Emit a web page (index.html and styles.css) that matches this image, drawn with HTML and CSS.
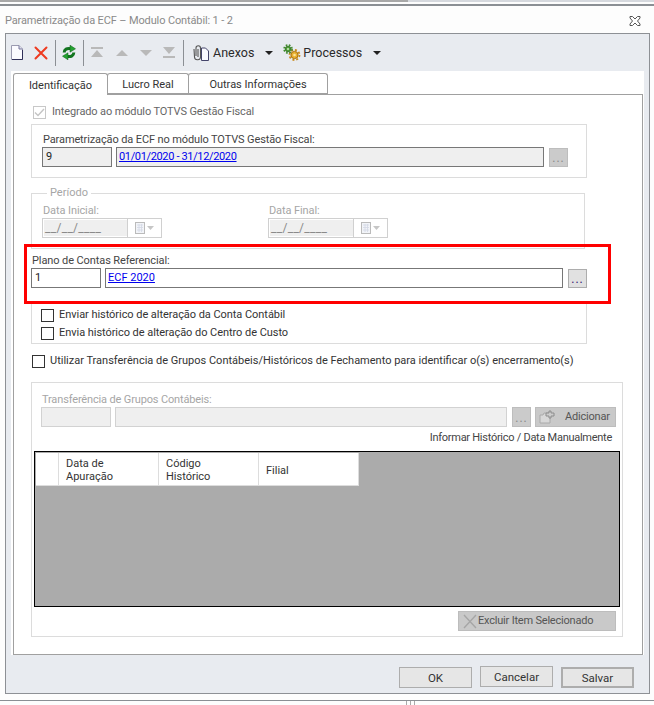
FILE: index.html
```html
<!DOCTYPE html>
<html lang="pt">
<head>
<meta charset="utf-8">
<title>Parametrização da ECF</title>
<link rel="stylesheet" href="styles.css">
</head>
<body>
<div class="page">
  <div class="top-strip"><span class="strip-dark"></span><span class="strip-light"></span></div>
  <div class="top-line"></div>
  <header class="titlebar">
    <span class="title-text">Parametrização da ECF – Modulo Contábil: 1 - 2</span>
    <svg class="close-icon" width="12" height="10" viewBox="0 0 12 10"><path d="M1 .5h2.500L6 3l2.500-2.500H11V2L8.500 5 11 8v1.500H8.500L6 7 3.500 9.500H1V8l2.500-3L1 2z" fill="#fff" stroke="#555" stroke-width="1"/></svg>
  </header>
  <div class="frame">
    <div class="toolbar">
      <svg class="ti ti-new" width="12" height="15" viewBox="0 0 12 15"><path d="M.5.5h7.500l3.500 3.500v10.500H.5z" fill="#fbfbff" stroke="#9a9ab0"/><path d="M8 .5v3.500h3.500" fill="#dde" stroke="#77779a"/><path d="M11.500 5v9.500H1" fill="none" stroke="#30305a"/></svg>
      <svg class="ti ti-del" width="14" height="14" viewBox="0 0 14 14"><path d="M1.500 1.500l11 11M12.500 1.500l-11 11" stroke="#ee3a20" stroke-width="2" stroke-linecap="round"/></svg>
      <span class="sep sep-1"></span>
      <svg class="ti ti-refresh" width="14" height="15" viewBox="0 0 14 15"><path d="M2.200 7.500C2.200 4.500 5 2.800 8.500 3.600" fill="none" stroke="#12751f" stroke-width="3"/><path d="M8 .2l5.500 3.600L8 7.200z" fill="#23a331" stroke="#0c5a14" stroke-width=".5"/><path d="M11.800 7.500c0 3-2.800 4.700-6.300 3.900" fill="none" stroke="#12751f" stroke-width="3"/><path d="M6 7.800L.5 11.200 6 14.800z" fill="#23a331" stroke="#0c5a14" stroke-width=".5"/></svg>
      <span class="sep sep-2"></span>
      <svg class="ti ti-first" width="12" height="11" viewBox="0 0 12 11"><path d="M0 0h12v2H0zM6 3l6 7H0z" fill="#b9b9b9"/></svg>
      <svg class="ti ti-up" width="12" height="6" viewBox="0 0 12 6"><path d="M6 0l6 6H0z" fill="#b9b9b9"/></svg>
      <svg class="ti ti-down" width="12" height="6" viewBox="0 0 12 6"><path d="M0 0h12L6 6z" fill="#b9b9b9"/></svg>
      <svg class="ti ti-last" width="12" height="11" viewBox="0 0 12 11"><path d="M0 0h12L6 7zM0 9h12v2H0z" fill="#b9b9b9"/></svg>
      <span class="sep sep-3"></span>
      <svg class="ti ti-clip" width="17" height="16" viewBox="0 0 17 16"><path d="M9.500 3h4l3 3v9.500h-7z" fill="#fafaff" stroke="#44446a"/><path d="M4 11V3a2.200 2.200 0 0 1 4.500 0v8.500a3 3 0 0 1-6 .5L2 4M6 4v8" fill="none" stroke="#555" stroke-width="1.100"/></svg>
      <span class="tool-text tool-anexos">Anexos</span>
      <span class="caret caret-1"></span>
      <svg class="ti ti-proc" width="18" height="17" viewBox="0 0 18 17"><circle cx="11.500" cy="11" r="3.600" fill="#e9b030" stroke="#a8710f" stroke-width="1"/><circle cx="11.500" cy="11" r="5" fill="none" stroke="#c98a1c" stroke-width="1.800" stroke-dasharray="2 1.900"/><circle cx="11.500" cy="11" r="1.300" fill="#fbe39a"/><circle cx="5" cy="5" r="2.800" fill="#4f9e38" stroke="#2c6a1c" stroke-width=".8"/><circle cx="5" cy="5" r="4" fill="none" stroke="#3f8a2c" stroke-width="1.600" stroke-dasharray="1.700 1.500"/><circle cx="5" cy="5" r="1" fill="#d5ecc6"/></svg>
      <span class="tool-text tool-proc">Processos</span>
      <span class="caret caret-2"></span>
    </div>
    <div class="sheet">
      <nav class="tabs">
        <span class="tab tab-active tab-1">Identificação</span>
        <span class="tab tab-2">Lucro Real</span>
        <span class="tab tab-3">Outras Informações</span>
      </nav>
      <div class="panel">
        <label class="check check-top muted-dark"><span class="box box-off"><svg width="11" height="9" viewBox="0 0 11 9"><path d="M1 4.500l3 3 6-6.500" fill="none" stroke="#c4c4c4" stroke-width="1.400"/></svg></span>Integrado ao módulo TOTVS Gestão Fiscal</label>

        <section class="group group-ecf">
          <div class="lbl">Parametrização da ECF no módulo TOTVS Gestão Fiscal:</div>
          <div class="row">
            <span class="inp inp-off inp-code">9</span>
            <span class="inp inp-off inp-ecf"><a class="lnk">01/01/2020 - 31/12/2020</a></span>
            <span class="dots dots-off dots-ecf">...</span>
          </div>
        </section>

        <fieldset class="periodo">
          <legend>Período</legend>
          <div class="date-cols">
            <div class="date-col date-col-a">
              <div class="lbl lbl-off">Data Inicial:</div>
              <div class="date"><span class="date-val">__/__/____</span><span class="date-btn"><svg width="20" height="14" viewBox="0 0 20 14"><rect x=".5" y="1.500" width="9" height="11" fill="#f2f4f8" stroke="#bbb"/><path d="M2 4h6M2 6.500h6M2 9h6M4 3v8M6.500 3v8" stroke="#d3d8e4" stroke-width=".8"/><path d="M12 5h7l-3.500 4z" fill="#c6c6c6"/></svg></span></div>
            </div>
            <div class="date-col">
              <div class="lbl lbl-off">Data Final:</div>
              <div class="date"><span class="date-val">__/__/____</span><span class="date-btn"><svg width="20" height="14" viewBox="0 0 20 14"><rect x=".5" y="1.500" width="9" height="11" fill="#f2f4f8" stroke="#bbb"/><path d="M2 4h6M2 6.500h6M2 9h6M4 3v8M6.500 3v8" stroke="#d3d8e4" stroke-width=".8"/><path d="M12 5h7l-3.500 4z" fill="#c6c6c6"/></svg></span></div>
            </div>
          </div>
        </fieldset>

        <section class="plano">
          <div class="lbl">Plano de Contas Referencial:</div>
          <div class="row">
            <span class="inp inp-code">1</span>
            <span class="inp inp-plano"><a class="lnk">ECF 2020</a></span>
            <span class="dots dots-on">...</span>
          </div>
        </section>

        <section class="group group-hist">
          <label class="check"><span class="box"></span>Enviar histórico de alteração da Conta Contábil</label>
          <label class="check check-2"><span class="box"></span>Envia histórico de alteração do Centro de Custo</label>
        </section>

        <label class="check check-util"><span class="box"></span>Utilizar Transferência de Grupos Contábeis/Históricos de Fechamento para identificar o(s) encerramento(s)</label>

        <section class="group group-transf">
          <div class="lbl lbl-off lbl-transf">Transferência de Grupos Contábeis:</div>
          <div class="row row-transf">
            <span class="inp inp-ghost inp-code"></span>
            <span class="inp inp-ghost inp-transf"></span>
            <span class="dots dots-off dots-transf">...</span>
            <span class="btn-off btn-add"><svg width="18" height="14" viewBox="0 0 18 14"><path d="M1 5h3l1-2h6v10H1z" fill="#d8d8d8" stroke="#aaa"/><path d="M10 1h2v2h3v3h-3v2h-2V6H7V3h3z" fill="#ccc" stroke="#8c8c8c"/></svg><span class="btn-add-text">Adicionar</span></span>
          </div>
          <div class="manual">Informar Histórico / Data Manualmente</div>
          <div class="grid">
            <div class="grid-head">
              <span class="gh gh-stub"></span>
              <span class="gh">Data de<br>Apuração</span>
              <span class="gh">Código<br>Histórico</span>
              <span class="gh">Filial</span>
            </div>
          </div>
          <div class="del-row">
            <span class="btn-off btn-del"><svg width="14" height="15" viewBox="0 0 14 15"><path d="M1 1l12 13M13 1L1 14" stroke="#a6a6a6" stroke-width="1.400"/></svg>Excluir Item Selecionado</span>
          </div>
        </section>
      </div>
    </div>
    <footer class="actions">
      <span class="act">OK</span>
      <span class="act act-cancel">Cancelar</span>
      <span class="act act-save">Salvar</span>
    </footer>
  </div>
  <div class="bottom-line"></div>
  <div class="bottom-ticks"><i></i><i></i><i></i></div>
  <div class="red-box"></div>
</div>
</body>
</html>
```
FILE: styles.css
```css
* { box-sizing: border-box; }
html, body { margin: 0; padding: 0; }
body { background: #fdfdfd; }
.page {
  position: relative; width: 654px; height: 705px; overflow: hidden;
  font: 11px/14px Roboto, "Liberation Sans", sans-serif; color: #333;
}
.top-strip { display: flex; height: 2px; }
.strip-dark { width: 408px; background: #a8a8a8; }
.strip-light { flex: 1; background: #d6d9de; }
.top-line { height: 2px; margin-top: 2px; background: #8b8f94; }
.titlebar { display: flex; align-items: center; justify-content: space-between; height: 27px; padding: 3px 13px 0 5px; }
.title-text { color: #8a8a8a; letter-spacing: -.13px; }
.frame { width: 645px; height: 661px; margin-left: 5px; border: 1px solid #8d9095; background: #e8ebf0; padding: 0 5px; }
.toolbar { display: flex; align-items: center; height: 37px; margin: 0 -5px; padding-left: 5px; }
.ti { flex: none; }
.ti-del { margin-left: 11px; }
.sep { flex: none; width: 1px; height: 26px; background: #8b8f94; }
.sep-1 { margin-left: 7px; }
.ti-refresh { margin-left: 6px; }
.sep-2 { margin-left: 7px; }
.ti-first { margin-left: 7px; }
.ti-up { margin-left: 13px; }
.ti-down { margin-left: 12px; }
.ti-last { margin-left: 11px; }
.sep-3 { margin-left: 8px; }
.ti-clip { margin-left: 8px; }
.tool-text { font-size: 12.500px; color: #2a2a2a; flex: none; }
.tool-anexos { margin-left: 4px; }
.caret { flex: none; width: 0; height: 0; border-left: 4px solid transparent; border-right: 4px solid transparent; border-top: 4px solid #222; }
.caret-1 { margin-left: 11px; }
.ti-proc { margin-left: 10px; }
.tool-proc { margin-left: 2px; }
.caret-2 { margin-left: 11px; }
.sheet { height: 584px; background: #fff; padding: 2px 1px 0 2px; }
.tabs { display: flex; height: 21px; position: relative; z-index: 1; }
.tab { display: flex; align-items: center; justify-content: center; height: 21px; border: 1px solid #a0a0a0; border-radius: 3px 3px 0 0; border-bottom: 0; background: #fff; padding-top: 2px; box-shadow: inset 0 -1px 0 #a0a0a0; }
.tab-1 { width: 95px; box-shadow: none; height: 22px; border-right: 1px solid #a0a0a0; }
.tab-2 { width: 82px; margin-left: -1px; }
.tab-3 { width: 140px; margin-left: -1px; }
.panel { height: 561px; border: 1px solid #a0a0a0; padding: 10px 0 0 17px; }
.check { display: flex; align-items: center; gap: 5px; height: 14px; letter-spacing: -.05px; }
.muted-dark { color: #666; }
.box { display: flex; align-items: center; justify-content: center; flex: none; width: 13px; height: 13px; border: 1px solid #333; background: #fff; }
.box-off { border-color: #c8c8c8; }
.check-top { margin-left: 2px; gap: 6px; letter-spacing: -.13px; }
.group { border: 1px solid #dcdcdc; }
.lbl { height: 14px; color: #444; white-space: nowrap; }
.lbl-off { color: #a6a6a6; letter-spacing: -.1px; }
.row { display: flex; align-items: flex-start; }
.inp { display: flex; align-items: center; height: 20px; padding-left: 2px; border: 1px solid #777; background: #fff; color: #222; flex: none; white-space: nowrap; }
.inp-off { background: #efefef; }
.inp-code { width: 70px; padding-left: 3px; }
.lnk { color: #0000ee; text-decoration: underline; }
.group-ecf { width: 556px; height: 54px; margin-top: 5px; padding: 8px 0 0 10px; }
.group-ecf .lbl { margin-left: 1px; letter-spacing: -.12px; }
.inp-ecf { width: 428px; margin-left: 4px; }
.inp-ecf .lnk { letter-spacing: -.35px; }
.dots { display: flex; align-items: flex-end; justify-content: center; flex: none; width: 19px; height: 19px; margin-top: 1px; font-size: 12px; line-height: 13px; padding-bottom: 1px; letter-spacing: 1px; }
.dots-off { background: #cbcbcb; border: 1px solid #bdbdbd; color: #888; }
.dots-ecf { margin-left: 5px; }
.dots-on { background: #e1e1e1; border: 1px solid #adadad; color: #301070; margin-left: 5px; }
.periodo { width: 554px; height: 63px; margin: 8px 0 0; padding: 4px 0 0 10px; border: 1px solid #dcdcdc; min-width: 0; }
.periodo legend { padding: 0 3px; margin-left: 5px; color: #a6a6a6; line-height: 14px; }
.date-cols { display: flex; }
.date-col-a { width: 226px; }
.date-col .lbl { margin-left: 1px; }
.date { display: flex; width: 120px; height: 20px; border: 1px solid #d0d0d0; }
.date-val { width: 84px; padding-left: 1px; background: #efefef; border: 1px solid #fff; border-right: 0; color: #8a8a8a; font-size: 12px; line-height: 16px; white-space: nowrap; letter-spacing: .3px; }
.date-btn { flex: 1; display: flex; align-items: center; justify-content: center; border-left: 1px solid #d0d0d0; background: #fff; }
.plano { margin-top: 5px; }
.plano .lbl { margin-left: 1px; letter-spacing: -.1px; }
.inp-plano { width: 458px; margin-left: 4px; }
.group-hist { width: 556px; height: 42px; margin-top: 14px; padding: 5px 0 0 9px; position: relative; z-index: 0; }
.check-2 { margin-top: 4px; }
.check-util { margin: 10px 0 0 1px; letter-spacing: 0; }
.group-transf { width: 592px; height: 255px; margin-top: 14px; padding: 0 2px; }
.lbl-transf { margin: 10px 0 0 8px; letter-spacing: -.15px; }
.row-transf { margin-left: 7px; }
.inp-ghost { border: 1px solid #d2d2d2; background: #efefef; }
.inp-transf { width: 392px; margin-left: 4px; }
.dots-transf { margin: 0 0 0 5px; height: 20px; }
.btn-off { display: flex; align-items: center; background: #c9c9c9; border: 1px solid #bdbdbd; color: #555; flex: none; }
.btn-add { width: 81px; height: 20px; margin-left: 4px; padding-left: 3px; letter-spacing: -.2px; }
.btn-add-text { margin-left: 8px; }
.manual { height: 14px; margin: 4px 8px 0 0; text-align: right; color: #444; letter-spacing: -.27px; }
.grid { width: 586px; height: 156px; margin: 6px 0 0 0; border: 1px solid #000; background: #ababab; padding: 1px; }
.grid-head { display: flex; width: 323px; height: 33px; background: #fff; }
.gh { display: flex; align-items: center; width: 100px; height: 33px; padding: 2px 0 0 7px; border-right: 1px solid #ddd; border-bottom: 1px solid #ddd; color: #333; line-height: 13px; }
.gh-stub { width: 23px; }
.del-row { display: flex; justify-content: flex-end; margin: 4px 4px 0 0; }
.btn-del { width: 158px; height: 20px; padding-left: 4px; gap: 1px; letter-spacing: -.2px; }
.actions { display: flex; height: 38px; padding: 12px 0 0 388px; align-items: flex-start; gap: 8px; font-size: 11.500px; }
.act { display: flex; align-items: center; justify-content: center; width: 73px; height: 21px; background: #e6e6e6; border: 1px solid #adadad; color: #333; }
.act-cancel { margin-top: -1px; }
.act-save { border-width: 2px; }
.bottom-line { width: 654px; height: 1px; margin-top: 6px; background: #8b8f94; }
.bottom-ticks { display: flex; gap: 3px; margin-left: 406px; height: 5px; }
.bottom-ticks i { width: 1px; height: 5px; background: #aaa; }
.red-box { position: absolute; left: 24px; top: 244px; width: 587px; height: 60px; border: 3px solid #ff0000; }
```
